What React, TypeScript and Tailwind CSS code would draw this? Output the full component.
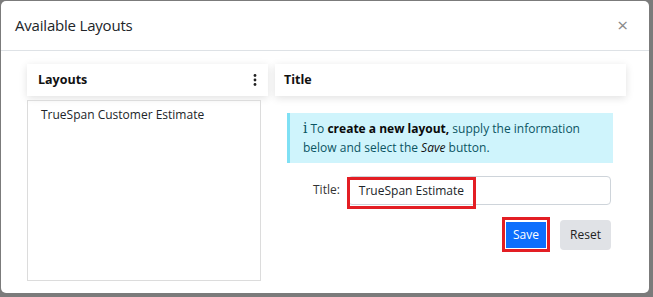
import React from 'react';

const KebabIcon = () => (
  <svg width="4" height="12" viewBox="0 0 4 12" fill="currentColor">
    <circle cx="2" cy="1.5" r="1.4" />
    <circle cx="2" cy="6" r="1.4" />
    <circle cx="2" cy="10.5" r="1.4" />
  </svg>
);

const App: React.FC = () => {
  return (
    <div
      className="w-[653px] h-[297px] bg-[#7b7b7b] pt-px pl-px overflow-hidden"
      style={{ fontFamily: '"Open Sans", "Noto Sans", sans-serif' }}
    >
      <div className="w-[648px] h-[292px] bg-white rounded-[5px] flex flex-col">
        {/* header */}
        <div className="h-[50px] border-b border-[#dee2e6] flex items-center justify-between pl-[14px] pr-[21px] shrink-0">
          <h1 className="text-[15px] text-[#212529] tracking-[-0.2px]">Available Layouts</h1>
          <span className="text-[#8a8a8a] text-[19px] leading-none">×</span>
        </div>

        {/* body */}
        <div className="flex gap-[7px] pl-[26px] pt-[13px]">
          {/* left column */}
          <div className="w-[241px] flex flex-col gap-[4px]">
            <div className="h-[32px] bg-white shadow-[0_2px_8px_rgba(0,0,0,0.12)] flex items-center justify-between pl-[11px] pr-[11px]">
              <span className="text-[12.5px] font-bold text-[#111]">Layouts</span>
              <span className="text-[#222]">
                <KebabIcon />
              </span>
            </div>
            <div className="w-[234px] h-[181px] border border-[#dcdcdc] pl-[13px] pt-0">
              <span className="text-[12px] text-[#212529]">TrueSpan Customer Estimate</span>
            </div>
          </div>

          {/* right column */}
          <div className="w-[351px] flex flex-col">
            <div className="h-[32px] bg-white shadow-[0_2px_8px_rgba(0,0,0,0.12)] flex items-center pl-[9px]">
              <span className="text-[12.5px] font-bold text-[#111]">Title</span>
            </div>

            <div className="ml-[12px] mr-[13px] mt-[17px] h-[50px] bg-[#cff4fc] border-l-[3px] border-[#7fe0f4] pl-[13px] pt-[6px] text-[12px] leading-[19px] text-[#0b5563]">
              <span className="text-[14px] mr-[3px]" style={{ fontFamily: '"DejaVu Serif", serif' }}>i</span>
              To <b className="text-[#0a0a0a]">create a new layout,</b> supply the information
              <br />
              below and select the <i className="text-[#111]">Save</i> button.
            </div>

            <div className="flex items-center mt-[13px] ml-[38px]">
              <label className="text-[12px] text-[#333] mr-[8px] -mt-[2px]">Title:</label>
              <div className="relative w-[263px] h-[29px] border border-[#ced4da] rounded-[4px] flex items-center pl-[10px]">
                <span className="text-[12px] text-[#212529]">TrueSpan Estimate</span>
                <div className="absolute -left-[2px] top-0 w-[129px] h-[32px] border-[3px] border-[#e31e24]" />
              </div>
            </div>

            <div className="flex justify-end items-center mr-[15px] mt-[12px] gap-[10px]">
              <div className="border-[3px] border-[#e31e24] p-px">
                <button className="w-[40px] h-[26px] bg-[#0d6efd] text-white text-[12px]">Save</button>
              </div>
              <button className="w-[51px] h-[30px] bg-[#e0e2e6] rounded-[4px] text-[12px] text-[#222]">Reset</button>
            </div>
          </div>
        </div>
      </div>
    </div>
  );
};

export default App;
